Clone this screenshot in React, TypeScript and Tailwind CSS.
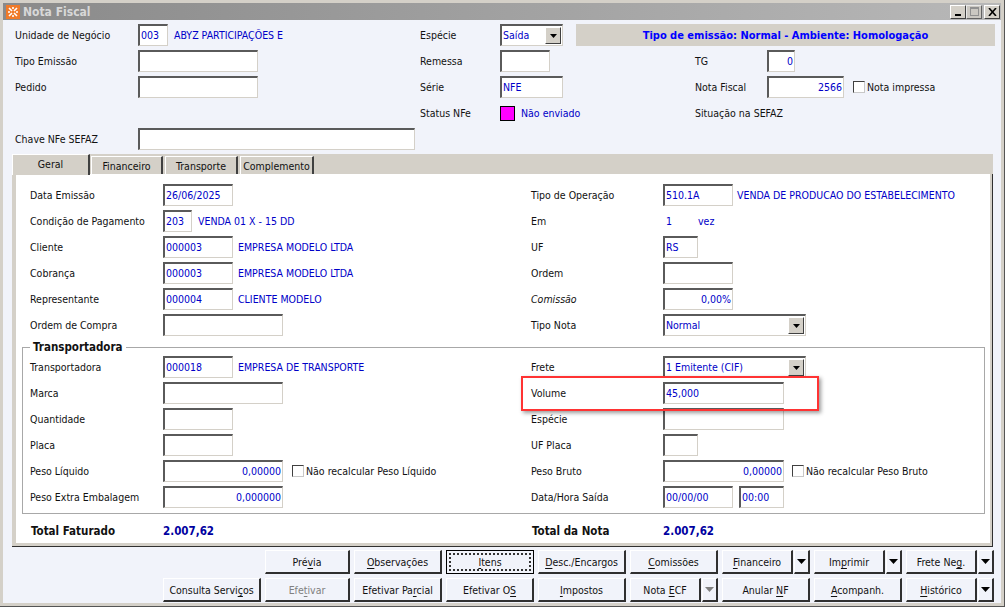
import React from 'react';

const blue = 'text-[#0000c8]';

// sunken edit box, same look everywhere
const Box = ({ w, children, right, className = '' }: { w: string; children?: React.ReactNode; right?: boolean; className?: string }) => (
    <div className={`${w} h-[22px] shrink-0 flex items-center overflow-hidden bg-white border-t-2 border-l-2 border-r border-b border-t-[#5a5a5a] border-l-[#5a5a5a] border-r-[#d4d0c8] border-b-[#d4d0c8] px-px ${right ? 'justify-end' : ''} ${blue} ${className}`}>
        {children}
    </div>
);

const Arrow = ({ color = '#000' }: { color?: string }) => (
    <svg width="9" height="5" viewBox="0 0 9 5"><path d="M0 0h9L4.5 5z" fill={color} /></svg>
);

// combo box with the little 3d arrow button
const Combo = ({ w, value }: { w: string; value: string }) => (
    <Box w={w} className="justify-between pr-0">
        <span>{value}</span>
        <div className="w-[16px] h-[17px] mr-px flex items-center justify-center bg-[#d4d0c8] border-t border-l border-r border-b border-t-white border-l-white border-r-[#404040] border-b-[#404040]">
            <svg width="7" height="4" viewBox="0 0 7 4"><path d="M0 0h7L3.5 4z" fill="#000" /></svg>
        </div>
    </Box>
);

const Check = ({ label }: { label: string }) => (
    <div className="flex items-center text-[#111]">
        <div className="w-[12px] h-[12px] mr-[2px] border border-t-[#404040] border-l-[#404040] border-r-[#c8c8c8] border-b-[#c8c8c8] bg-white" />
        {label}
    </div>
);

const Value = ({ children, ml = 'ml-[5px]' }: { children: React.ReactNode; ml?: string }) => (
    <span className={`${ml} ${blue} whitespace-nowrap`}>{children}</span>
);

const Cell = ({ children, className = '' }: { children?: React.ReactNode; className?: string }) => (
    <div className={`flex items-center h-[26px] whitespace-nowrap ${className}`}>{children}</div>
);

// Caption uses & for the shortcut letter, like the original form
const Caption = ({ text }: { text: string }) => {
    const i = text.indexOf('&');
    if (i < 0) return <span>{text}</span>;
    return (
        <span>
            {text.slice(0, i)}
            <span className="underline underline-offset-2">{text[i + 1]}</span>
            {text.slice(i + 2)}
        </span>
    );
};

const btnEdge = 'bg-[#f1f3fa] border-t border-l border-t-white border-l-white border-r-2 border-b-2 border-r-[#303030] border-b-[#303030]';

const Btn = ({ text, w = 'w-[88px]', disabled, className = '' }: { text: string; w?: string; disabled?: boolean; className?: string }) => (
    <button className={`${w} h-[24px] shrink-0 flex items-center justify-center pt-px ${btnEdge} ${disabled ? 'text-[#808080]' : 'text-[#111]'} ${className}`}>
        <Caption text={text} />
    </button>
);

const SplitBtn = ({ text, disabled }: { text: string; disabled?: boolean }) => (
    <div className="flex w-[88px] shrink-0">
        <Btn text={text} w="w-[71px]" />
        <button className={`w-[16px] h-[24px] ml-px flex items-center justify-center ${btnEdge}`}>
            <Arrow color={disabled ? '#808080' : '#000'} />
        </button>
    </div>
);

const FocusBtn = ({ text }: { text: string }) => (
    <button className="w-[88px] h-[24px] shrink-0 p-[2px] bg-[#f1f3fa] border border-black">
        <div className="w-full h-full flex items-center justify-center pt-px border-2 border-dotted border-[#333] text-[#111]">
            <Caption text={text} />
        </div>
    </button>
);

const CaptionBtnBar = () => (
    <div className="flex flex-col gap-1 items-end pt-[3px] pr-[7px]">
        <div className="flex gap-1">
            <Btn text="Pré&via" w="w-[85px]" />
            <Btn text="&Observações" />
            <FocusBtn text="&Itens" />
            <Btn text="&Desc./Encargos" />
            <Btn text="&Comissões" />
            <SplitBtn text="&Financeiro" />
            <SplitBtn text="Im&primir" />
            <SplitBtn text="Frete Ne&g." />
        </div>
        <div className="flex gap-1">
            <Btn text="Consulta Servi&ços" w="w-[98px]" />
            <Btn text="Efe&tivar" w="w-[85px]" disabled />
            <Btn text="Efetivar Pa&rcial" />
            <Btn text="Efetivar O&S" />
            <Btn text="&Impostos" />
            <SplitBtn text="Nota &ECF" disabled />
            <Btn text="Anular &NF" />
            <Btn text="&Acompanh." />
            <SplitBtn text="&Histórico" />
        </div>
    </div>
);

const CapBtn = ({ children, disabled }: { children: React.ReactNode; disabled?: boolean }) => (
    <div className={`w-[16px] h-[14px] flex items-center justify-center bg-[#d4d0c8] border-t border-l border-r border-b border-t-white border-l-white border-r-[#404040] border-b-[#404040] ${disabled ? 'opacity-70' : ''}`}>
        {children}
    </div>
);

const TitleBar = () => (
    <div className="h-[17px] flex items-center justify-between bg-gradient-to-r from-[#8a8a8a] to-[#b8b8b8]">
        <div className="flex items-center pl-[3px]">
            <svg width="14" height="14" viewBox="0 0 14 14">
                <rect width="14" height="14" fill="#f07a28" />
                <path d="M3 3l3 3M11 3L8 6M3 11l3-3M11 11L8 8M7 2v2M7 10v2M2 7h2M10 7h2" stroke="#fff" strokeWidth="1.6" />
            </svg>
            <span className="ml-[3px] font-bold text-[12px] text-[#d8d8d8]">Nota Fiscal</span>
        </div>
        <div className="flex items-center pr-[1px]">
            <CapBtn>
                <div className="w-[6px] h-[2px] bg-black mt-[6px]" />
            </CapBtn>
            <CapBtn disabled>
                <div className="w-[9px] h-[9px] border border-t-2 border-[#808080]" />
            </CapBtn>
            <div className="w-[2px]" />
            <CapBtn>
                <svg width="9" height="8" viewBox="0 0 9 8"><path d="M1 0l7 8M8 0L1 8" stroke="#000" strokeWidth="1.6" /></svg>
            </CapBtn>
        </div>
    </div>
);

const Header = () => (
    <div className="pl-[12px] pr-[6px] pt-[2px] grid grid-cols-[123px_282px_80px_195px_72px_1fr] text-[#111]">
        <Cell>Unidade de Negócio</Cell>
        <Cell><Box w="w-[30px]">003</Box><Value ml="ml-[6px]">ABYZ PARTICIPAÇÕES E</Value></Cell>
        <Cell>Espécie</Cell>
        <Cell className="col-span-3">
            <Combo w="w-[63px]" value="Saída" />
            <div className={`ml-[13px] flex-1 h-[22px] flex items-center justify-center bg-[#d4d0c8] font-bold text-[11px] text-[#0000ff]`}>
                Tipo de emissão: Normal - Ambiente: Homologação
            </div>
        </Cell>

        <Cell>Tipo Emissão</Cell>
        <Cell><Box w="w-[120px]" /></Cell>
        <Cell>Remessa</Cell>
        <Cell><Box w="w-[50px]" /></Cell>
        <Cell>TG</Cell>
        <Cell><Box w="w-[28px]" right>0</Box></Cell>

        <Cell>Pedido</Cell>
        <Cell><Box w="w-[120px]" /></Cell>
        <Cell>Série</Cell>
        <Cell><Box w="w-[63px]">NFE</Box></Cell>
        <Cell>Nota Fiscal</Cell>
        <Cell><Box w="w-[77px]" right>2566</Box><div className="ml-[9px]"><Check label="Nota impressa" /></div></Cell>

        <Cell />
        <Cell />
        <Cell>Status NFe</Cell>
        <Cell><div className="w-[15px] h-[15px] bg-[#ff00ff] border border-black" /><Value ml="ml-[6px]">Não enviado</Value></Cell>
        <Cell>Situação na SEFAZ</Cell>
        <Cell />

        <Cell>Chave NFe SEFAZ</Cell>
        <Cell><Box w="w-[277px]" /></Cell>
    </div>
);

const Tab = ({ label, w, active }: { label: string; w: string; active?: boolean }) => (
    <div className={`${w} flex items-center justify-center text-[#111] bg-[#d4d0c8] border-l border-t border-r-2 border-l-white border-t-white border-r-[#404040] ${active ? 'h-[21px] pb-[1px] relative z-10' : 'h-[18px] mt-[2px] mr-[2px] pt-px'}`}>
        {label}
    </div>
);

const TabStrip = () => (
    <div className="mt-[2px] ml-[9px] mr-[8px] h-[20px] bg-[#d4d0c8] flex items-start">
        <Tab label="Geral" w="w-[78px]" active />
        <div className="w-px" />
        <Tab label="Financeiro" w="w-[72px]" />
        <Tab label="Transporte" w="w-[73px]" />
        <Tab label="Complemento" w="w-[74px]" />
    </div>
);

const panelRow = 'grid grid-cols-[133px_368px_132px_1fr] text-[#111]';

const Panel = () => (
    <div className="ml-[9px] mr-[8px] h-[373px] bg-[#d4d0c8] pl-[4px] pr-[2px] pb-[3px] border-b border-r border-b-[#303030] border-r-[#303030]">
        <div className="h-full bg-white border-t border-t-white">
            <div className={`${panelRow} pt-[7px] pl-[14px]`}>
                <Cell>Data Emissão</Cell>
                <Cell><Box w="w-[70px]">26/06/2025</Box></Cell>
                <Cell>Tipo de Operação</Cell>
                <Cell><Box w="w-[70px]">510.1A</Box><Value ml="ml-[4px]">VENDA DE PRODUCAO DO ESTABELECIMENTO</Value></Cell>

                <Cell>Condição de Pagamento</Cell>
                <Cell><Box w="w-[29px]">203</Box><Value ml="ml-[6px]">VENDA 01 X - 15 DD</Value></Cell>
                <Cell>Em</Cell>
                <Cell><Value ml="ml-[3px]">1</Value><Value ml="ml-[26px]">vez</Value></Cell>

                <Cell>Cliente</Cell>
                <Cell><Box w="w-[70px]">000003</Box><Value>EMPRESA MODELO LTDA</Value></Cell>
                <Cell>UF</Cell>
                <Cell><Box w="w-[35px]">RS</Box></Cell>

                <Cell>Cobrança</Cell>
                <Cell><Box w="w-[70px]">000003</Box><Value>EMPRESA MODELO LTDA</Value></Cell>
                <Cell>Ordem</Cell>
                <Cell><Box w="w-[70px]" /></Cell>

                <Cell>Representante</Cell>
                <Cell><Box w="w-[70px]">000004</Box><Value>CLIENTE MODELO</Value></Cell>
                <Cell className="italic">Comissão</Cell>
                <Cell><Box w="w-[70px]" right>0,00%</Box></Cell>

                <Cell>Ordem de Compra</Cell>
                <Cell><Box w="w-[120px]" /></Cell>
                <Cell>Tipo Nota</Cell>
                <Cell><Combo w="w-[143px]" value="Normal" /></Cell>
            </div>

            <div className={`relative mt-[9px] ml-[6px] mr-[5px] border border-[#a8a8a8] pt-[6px] pb-[3px] pl-[7px] ${panelRow}`}>
                <span className="absolute -top-[8px] left-[7px] px-[3px] bg-white font-bold text-[11.5px] leading-[14px]">Transportadora</span>

                <Cell>Transportadora</Cell>
                <Cell><Box w="w-[70px]">000018</Box><Value>EMPRESA DE TRANSPORTE</Value></Cell>
                <Cell>Frete</Cell>
                <Cell><Combo w="w-[143px]" value="1 Emitente (CIF)" /></Cell>

                <Cell>Marca</Cell>
                <Cell><Box w="w-[120px]" /></Cell>
                <Cell>Volume</Cell>
                <Cell><Box w="w-[121px]">45,000</Box></Cell>

                <Cell>Quantidade</Cell>
                <Cell><Box w="w-[70px]" /></Cell>
                <Cell>Espécie</Cell>
                <Cell><Box w="w-[121px]" /></Cell>

                <Cell>Placa</Cell>
                <Cell><Box w="w-[70px]" /></Cell>
                <Cell>UF Placa</Cell>
                <Cell><Box w="w-[35px]" /></Cell>

                <Cell>Peso Líquido</Cell>
                <Cell><Box w="w-[120px]" right>0,00000</Box><div className="ml-[9px]"><Check label="Não recalcular Peso Líquido" /></div></Cell>
                <Cell>Peso Bruto</Cell>
                <Cell><Box w="w-[121px]" right>0,00000</Box><div className="ml-[8px]"><Check label="Não recalcular Peso Bruto" /></div></Cell>

                <Cell>Peso Extra Embalagem</Cell>
                <Cell><Box w="w-[120px]" right>0,000000</Box></Cell>
                <Cell>Data/Hora Saída</Cell>
                <Cell><Box w="w-[70px]">00/00/00</Box><Box w="w-[45px]" className="ml-[6px]">00:00</Box></Cell>
            </div>

            <div className="grid grid-cols-[132px_369px_131px_1fr] text-[#111] pt-[5px] pl-[15px] font-bold text-[11.5px]">
                <Cell>Total Faturado</Cell>
                <Cell className="text-[#0000a0]">2.007,62</Cell>
                <Cell>Total da Nota</Cell>
                <Cell className="text-[#0000a0]">2.007,62</Cell>
            </div>
        </div>
    </div>
);

const App = () => {
    return (
        <div className="relative w-[1006px] h-[609px] bg-white overflow-hidden font-['DejaVu_Sans_Condensed','Noto_Sans',sans-serif] text-[10.5px] leading-none">
            <div className="w-[1005px] h-[607px] bg-[#d4d0c8] p-[3px] border-r border-b border-r-[#555] border-b-[#555]">
                <div className="h-full bg-[#f1f3fa]">
                    <TitleBar />
                    <Header />
                    <TabStrip />
                    <Panel />
                    <CaptionBtnBar />
                </div>
            </div>
            {/* red highlight drawn over the screenshot */}
            <div className="absolute left-[521px] top-[376px] w-[298px] h-[35px] border-2 border-[#ff3333] shadow-[2px_2px_4px_rgba(0,0,0,0.4)]" />
        </div>
    );
};

export default App;
